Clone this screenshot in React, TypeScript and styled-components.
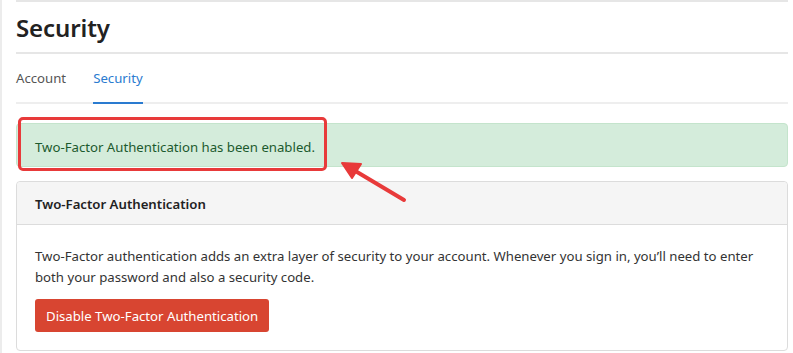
import React from "react";
import styled, { createGlobalStyle } from "styled-components";

const Global = createGlobalStyle`
  html, body { margin: 0; padding: 0; background: #fff; }
  body { font-family: "Noto Sans", "Open Sans", sans-serif; color: #333; }
  * { box-sizing: border-box; }
`;

const Page = styled.div`
  position: relative;
  width: 793px;
  height: 353px;
  overflow: hidden;
  border-left: 2px solid #ececec;
  padding: 0 5px 0 14px;
`;

const TopRule = styled.div`
  height: 3px;
  border-top: 2px solid #e6e6e6;
`;

const TitleBar = styled.div`
  height: 51px;
  border-bottom: 2px solid #e6e6e6;
  display: flex;
  align-items: center;
`;

const Title = styled.h1`
  margin: 0;
  font-size: 24px;
  font-weight: 600;
  color: #222;
  letter-spacing: -0.1px;
  line-height: 1;
  padding-top: 1px;
`;

const Tabs = styled.nav`
  display: flex;
  gap: 27px;
  height: 50px;
  border-bottom: 2px solid #eeeeee;
`;

const Tab = styled.div<{ $active?: boolean }>`
  font-size: 13.2px;
  color: ${(p) => (p.$active ? "#2a7bd0" : "#555")};
  display: flex;
  align-items: center;
  height: 50px;
  border-bottom: 2px solid ${(p) => (p.$active ? "#2a7bd0" : "transparent")};
  margin-bottom: -2px;
`;

const Alert = styled.div`
  margin-top: 19px;
  height: 44px;
  background: #d4ecdb;
  border: 1px solid #c4e4cc;
  border-radius: 4px;
  display: flex;
  align-items: center;
  padding: 3px 0 0 18px;
  font-size: 13.2px;
  color: #1c5a2e;
`;

const Card = styled.div`
  margin-top: 14px;
  border: 1px solid #dcdcdc;
  border-radius: 4px;
  height: 170px;
`;

const CardHeader = styled.div`
  height: 43px;
  background: #f5f5f5;
  border-bottom: 1px solid #dcdcdc;
  display: flex;
  align-items: center;
  padding: 2px 0 0 18px;
  font-size: 13.2px;
  font-weight: 600;
  color: #222;
  border-radius: 4px 4px 0 0;
`;

const CardBody = styled.div`
  padding: 21px 18px 0;
`;

const Text = styled.p`
  margin: 0;
  font-size: 13.2px;
  line-height: 21px;
  color: #333;
`;

const DangerButton = styled.button`
  margin-top: 11px;
  height: 33px;
  padding: 1px 11px 0;
  border: none;
  border-radius: 3px;
  background: #d84531;
  color: #fff;
  font-family: inherit;
  font-size: 13.2px;
`;

const Highlight = styled.div`
  position: absolute;
  left: 16px;
  top: 117px;
  width: 309px;
  height: 54px;
  border: 3px solid #e83a3a;
  border-radius: 5px;
`;

const Arrow = styled.svg`
  position: absolute;
  left: 328px;
  top: 151px;
`;

export default function App() {
  return (
    <>
      <Global />
      <Page>
        <TopRule />
        <TitleBar>
          <Title>Security</Title>
        </TitleBar>
        <Tabs>
          <Tab>Account</Tab>
          <Tab $active>Security</Tab>
        </Tabs>
        <Alert>Two-Factor Authentication has been enabled.</Alert>
        <Card>
          <CardHeader>Two-Factor Authentication</CardHeader>
          <CardBody>
            <Text>
              Two-Factor authentication adds an extra layer of security to your account. Whenever you sign in, you’ll need to enter both your password and also a security code.
            </Text>
            <DangerButton>Disable Two-Factor Authentication</DangerButton>
          </CardBody>
        </Card>
        <Highlight />
        <Arrow width="80" height="60" viewBox="0 0 80 60">
          <line x1="74" y1="49" x2="22" y2="18" stroke="#e83a3a" strokeWidth="4" strokeLinecap="round" />
          <polygon points="12,12 31,13 22,27" fill="#e83a3a" stroke="#e83a3a" strokeWidth="2" strokeLinejoin="round" />
        </Arrow>
      </Page>
    </>
  );
}
